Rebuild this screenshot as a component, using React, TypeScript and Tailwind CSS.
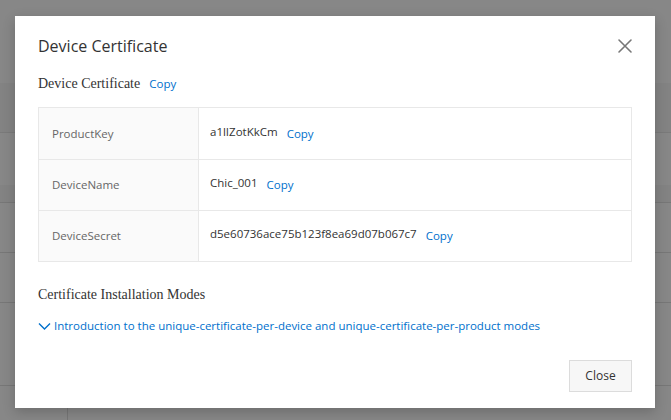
import React from 'react';

const sans = "font-['Open_Sans',sans-serif]";
const serif = "font-['Liberation_Serif',serif]";

const rows = [
  { label: 'ProductKey', value: 'a1lIZotKkCm' },
  { label: 'DeviceName', value: 'Chic_001' },
  { label: 'DeviceSecret', value: 'd5e60736ace75b123f8ea69d07b067c7' },
];

const CopyLink: React.FC = () => (
  <a href="#" className={`${sans} text-[11.5px] text-[#0070cc] leading-none`}>
    Copy
  </a>
);

const App: React.FC = () => {
  return (
    <div className="relative w-[671px] h-[420px] overflow-hidden bg-white">
      {/* page underneath the mask */}
      <div className="flex flex-col">
        <div className="h-[83px]" />
        <div className="h-[50px] bg-[#f8f8f8] border-b border-[#e6e6e6]" />
        <div className="h-[52px]" />
        <div className="h-[17px] bg-[#f8f8f8]" />
        <div className="h-[50px] border-t border-[#e0e0e0]" />
        <div className="h-[50px] border-t border-[#e0e0e0]" />
        <div className="h-[83px] border-t border-[#e0e0e0]" />
        <div className="flex h-[40px] border-t border-[#e0e0e0]">
          <div className="w-[68px] border-r border-[#e0e0e0]" />
        </div>
      </div>

      <div className="absolute inset-0 bg-black/[0.47]" />

      <div className="absolute left-[15px] top-[16px] w-[640px] h-[392px] bg-white shadow-[0_4px_12px_rgba(0,0,0,0.2)] flex flex-col px-[23px]">
        <div className="flex items-center justify-between h-[58px] pt-[1px]">
          <h2 className={`${sans} text-[16px] text-[#333] leading-none`}>Device Certificate</h2>
          <svg width="16" height="16" viewBox="0 0 16 16" className="mr-[-1px]">
            <path d="M2 2 L14 14 M14 2 L2 14" stroke="#777" strokeWidth="1.6" strokeLinecap="round" />
          </svg>
        </div>

        <div className="flex items-baseline gap-[9px] h-[22px] mt-[-1px]">
          <span className={`${serif} text-[14px] text-[#333]`}>Device Certificate</span>
          <CopyLink />
        </div>

        <div className="mt-[12px] border border-[#e8e8e8]">
          {rows.map((r, i) => (
            <div key={r.label} className={`flex h-[51px] ${i > 0 ? 'border-t border-[#e8e8e8]' : 'h-[50px]'}`}>
              <div className={`${sans} w-[160px] bg-[#fafafa] border-r border-[#e8e8e8] flex items-center pl-[13px] text-[11.5px] text-[#666]`}>
                {r.label}
              </div>
              <div className="flex items-center pl-[11px] gap-[9px]">
                <span className={`${sans} text-[11.5px] text-[#333] -mt-[4px]`}>{r.value}</span>
                <CopyLink />
              </div>
            </div>
          ))}
        </div>

        <div className={`${serif} mt-[26px] text-[14px] text-[#333] leading-none`}>Certificate Installation Modes</div>

        <a href="#" className={`${sans} mt-[18px] flex items-center gap-[3px] text-[11.5px] text-[#0070cc] leading-none`}>
          <svg width="13" height="12" viewBox="0 0 13 12">
            <path d="M1 3.5 L6.5 9 L12 3.5" fill="none" stroke="#0070cc" strokeWidth="1.4" />
          </svg>
          Introduction to the unique-certificate-per-device and unique-certificate-per-product modes
        </a>

        <div className="flex justify-end mt-auto mb-[16px]">
          <button className={`${sans} w-[63px] h-[32px] bg-[#f7f7f7] border border-[#dcdcdc] text-[12px] text-[#333]`}>
            Close
          </button>
        </div>
      </div>
    </div>
  );
};

export default App;
